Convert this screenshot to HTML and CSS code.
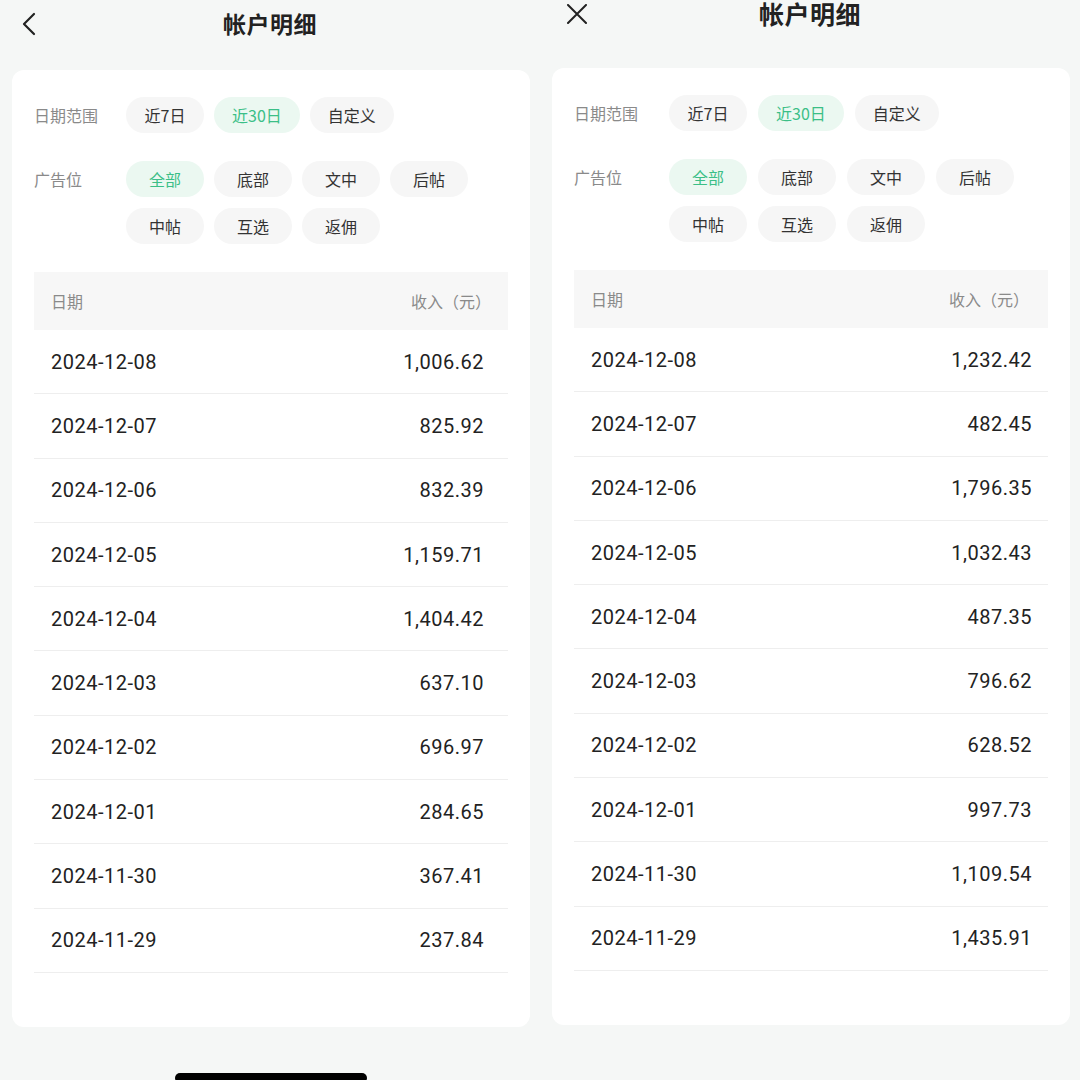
FILE: index.html
```html
<!DOCTYPE html>
<html lang="zh-CN">
<head>
<meta charset="utf-8">
<title>帐户明细</title>
<link rel="stylesheet" href="styles.css">
</head>
<body>
<div class="screens">
  <section class="panel panel-left">
    <header class="topbar topbar-left">
      <span class="nav-icon">
        <svg width="16" height="24" viewBox="0 0 16 24"><path d="M13 2 L3 12 L13 22" fill="none" stroke="#222" stroke-width="2.2" stroke-linecap="round" stroke-linejoin="round"/></svg>
      </span>
      <h1 class="title">帐户明细</h1>
      <span></span>
    </header>
    <div class="card">
      <div class="filter">
        <div class="filter-label">日期范围</div>
        <div class="chips">
          <span class="chip">近7日</span>
          <span class="chip active">近30日</span>
          <span class="chip">自定义</span>
        </div>
      </div>
      <div class="filter">
        <div class="filter-label">广告位</div>
        <div class="chips">
          <span class="chip active">全部</span>
          <span class="chip">底部</span>
          <span class="chip">文中</span>
          <span class="chip">后帖</span>
          <span class="chip">中帖</span>
          <span class="chip">互选</span>
          <span class="chip">返佣</span>
        </div>
      </div>
      <div class="table">
        <div class="thead"><span>日期</span><span>收入（元）</span></div>
        <div class="row"><span class="date">2024-12-08</span><span class="amt">1,006.62</span></div>
        <div class="row"><span class="date">2024-12-07</span><span class="amt">825.92</span></div>
        <div class="row"><span class="date">2024-12-06</span><span class="amt">832.39</span></div>
        <div class="row"><span class="date">2024-12-05</span><span class="amt">1,159.71</span></div>
        <div class="row"><span class="date">2024-12-04</span><span class="amt">1,404.42</span></div>
        <div class="row"><span class="date">2024-12-03</span><span class="amt">637.10</span></div>
        <div class="row"><span class="date">2024-12-02</span><span class="amt">696.97</span></div>
        <div class="row"><span class="date">2024-12-01</span><span class="amt">284.65</span></div>
        <div class="row"><span class="date">2024-11-30</span><span class="amt">367.41</span></div>
        <div class="row"><span class="date">2024-11-29</span><span class="amt">237.84</span></div>
      </div>
    </div>
    <div class="home-bar"></div>
  </section>

  <section class="panel panel-right">
    <header class="topbar topbar-right">
      <span class="nav-icon">
        <svg width="22" height="20" viewBox="0 0 22 20"><path d="M2 1 L20 19 M20 1 L2 19" fill="none" stroke="#222" stroke-width="2" stroke-linecap="round"/></svg>
      </span>
      <h1 class="title title-lg">帐户明细</h1>
      <span></span>
    </header>
    <div class="card card-right">
      <div class="filter">
        <div class="filter-label">日期范围</div>
        <div class="chips">
          <span class="chip">近7日</span>
          <span class="chip active">近30日</span>
          <span class="chip">自定义</span>
        </div>
      </div>
      <div class="filter">
        <div class="filter-label">广告位</div>
        <div class="chips">
          <span class="chip active">全部</span>
          <span class="chip">底部</span>
          <span class="chip">文中</span>
          <span class="chip">后帖</span>
          <span class="chip">中帖</span>
          <span class="chip">互选</span>
          <span class="chip">返佣</span>
        </div>
      </div>
      <div class="table table-right">
        <div class="thead"><span>日期</span><span>收入（元）</span></div>
        <div class="row"><span class="date">2024-12-08</span><span class="amt">1,232.42</span></div>
        <div class="row"><span class="date">2024-12-07</span><span class="amt">482.45</span></div>
        <div class="row"><span class="date">2024-12-06</span><span class="amt">1,796.35</span></div>
        <div class="row"><span class="date">2024-12-05</span><span class="amt">1,032.43</span></div>
        <div class="row"><span class="date">2024-12-04</span><span class="amt">487.35</span></div>
        <div class="row"><span class="date">2024-12-03</span><span class="amt">796.62</span></div>
        <div class="row"><span class="date">2024-12-02</span><span class="amt">628.52</span></div>
        <div class="row"><span class="date">2024-12-01</span><span class="amt">997.73</span></div>
        <div class="row"><span class="date">2024-11-30</span><span class="amt">1,109.54</span></div>
        <div class="row"><span class="date">2024-11-29</span><span class="amt">1,435.91</span></div>
      </div>
    </div>
  </section>
</div>
</body>
</html>
```

FILE: styles.css
```css
html, body {
  margin: 0;
  padding: 0;
  width: 1080px;
  height: 1080px;
  overflow: hidden;
  background: #f5f7f6;
  font-family: "Noto Sans CJK SC", "Noto Sans", sans-serif;
  color: #222;
}

.screens {
  display: flex;
  width: 1080px;
  height: 1080px;
}

.panel {
  width: 540px;
  display: flex;
  flex-direction: column;
  align-items: flex-start;
}

.panel > * {
  flex-shrink: 0;
}

.topbar {
  width: 540px;
  display: grid;
  grid-template-columns: 1fr auto 1fr;
  align-items: center;
}

.topbar-left {
  height: 48px;
  margin-bottom: 22px;
}

.topbar-right {
  height: 28px;
  margin-bottom: 40px;
}

.topbar-left .nav-icon {
  padding-left: 21px;
  display: flex;
  align-items: center;
}

.topbar-right .nav-icon {
  padding-left: 26px;
  display: flex;
  align-items: center;
}

.title {
  margin: 0;
  font-size: 23px;
  font-weight: 700;
  line-height: 1.1;
  color: #222;
  letter-spacing: 0.5px;
}

.title-lg {
  font-size: 25px;
}

.card {
  margin-left: 12px;
  width: 518px;
  height: 957px;
  box-sizing: border-box;
  background: #fff;
  border-radius: 12px;
  padding: 27px 22px 0 22px;
}

.filter {
  display: grid;
  grid-template-columns: 92px 1fr;
  margin-bottom: 28px;
}

.filter-label {
  font-size: 16px;
  line-height: 36px;
  color: #8a8a8a;
}

.chips {
  display: flex;
  flex-wrap: wrap;
  gap: 11px 10px;
  width: 360px;
}

.card-right .filter {
  grid-template-columns: 95px 1fr;
}

.card-right .chips {
  gap: 11px 11px;
}

.chip {
  min-width: 78px;
  height: 36px;
  box-sizing: border-box;
  padding: 0 18px;
  border-radius: 18px;
  background: #f6f6f6;
  color: #333;
  font-size: 16px;
  line-height: 36px;
  text-align: center;
}

.chip.active {
  background: #ebf8f1;
  color: #3bbf87;
}

.table {
  width: 474px;
}

.thead {
  height: 58px;
  background: #f7f7f7;
  display: flex;
  justify-content: space-between;
  align-items: center;
  padding: 0 17px 0 17px;
  font-size: 16px;
  color: #8a8a8a;
}

.row {
  height: 64.3px;
  box-sizing: border-box;
  border-bottom: 1px solid #eeeeee;
  display: flex;
  justify-content: space-between;
  align-items: center;
  padding: 0 24px 0 17px;
  font-family: Roboto, "Liberation Sans", sans-serif;
  font-size: 20px;
  color: #222;
  letter-spacing: 0.5px;
}

.table-right .row {
  padding-right: 16px;
}

.table-right .thead {
  padding-right: 19px;
}

.home-bar {
  margin-top: 46px;
  margin-left: 175px;
  width: 192px;
  height: 10px;
  border-radius: 5px;
  background: #000;
}
```
